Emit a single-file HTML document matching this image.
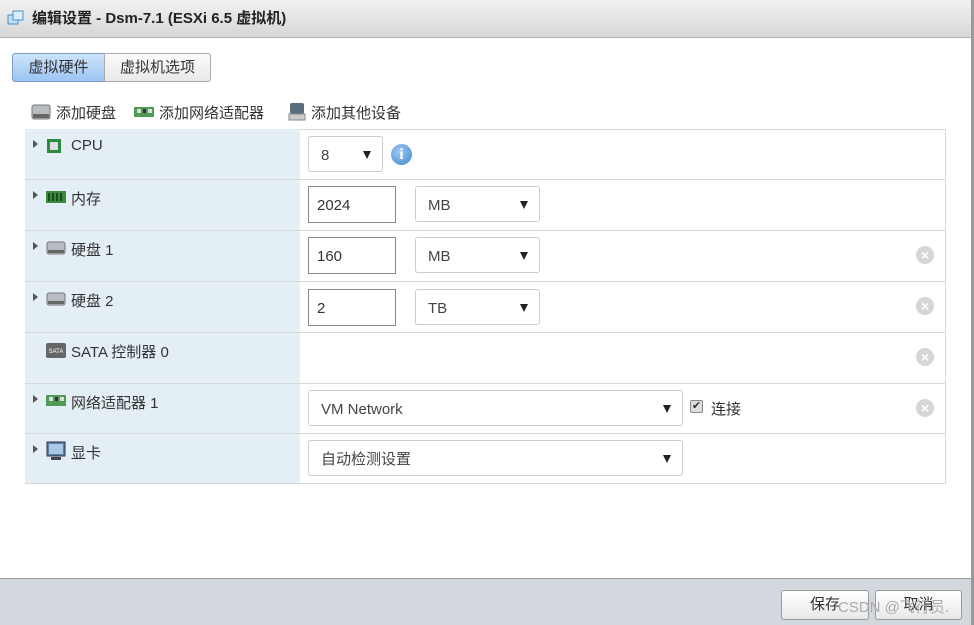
<!DOCTYPE html>
<html><head><meta charset="utf-8"><style>
*{box-sizing:border-box;margin:0;padding:0}
body{width:974px;height:625px;position:relative;background:#fff;font-family:"Liberation Sans","Noto Sans CJK SC",sans-serif;font-size:15px;color:#333;overflow:hidden}
.a{position:absolute}
.title{left:0;top:0;width:974px;height:38px;background:linear-gradient(#f2f2f2,#d6d6d6);border-bottom:1px solid #b5b5b5;font-weight:bold;font-size:15px;color:#222;line-height:37px;padding-left:32px}
.rb{right:0;top:0;width:3px;height:625px;background:#999}
.tab{top:53px;height:29px;line-height:27px;font-size:15px;text-align:center;border:1px solid #aaa}
.row{left:25px;width:921px;height:51px;border-top:1px solid #d8d8d8}
.lc{position:absolute;left:0;top:0;width:275px;height:100%;background:#e4eef5}
.lab{position:absolute;left:46px;top:8px;font-size:15px}
.tri{position:absolute;left:8px;top:11px;width:0;height:0;border-left:5px solid #555;border-top:4px solid transparent;border-bottom:4px solid transparent}
.ico{position:absolute;left:21px;top:9px}
.inp{position:absolute;height:37px;border:1px solid #888;padding-left:8px;line-height:37px;font-size:15px;background:#fff}
.sel{position:absolute;height:36px;border:1px solid #ccc;border-radius:3px;padding-left:12px;line-height:37px;font-size:15px;color:#444;background:#fff}
.sel:after{content:"";position:absolute;right:11px;top:14px;border-top:8px solid #222;border-left:4.5px solid transparent;border-right:4.5px solid transparent}
.x{position:absolute;left:891px;top:15px;width:18px;height:18px;border-radius:50%;background:#d6d6d6;color:#fff;font-size:14px;font-weight:bold;line-height:18px;text-align:center}
.footer{left:0;top:578px;width:971px;height:47px;background:#d3d8df;border-top:1px solid #999}
.btn{top:590px;height:30px;border:1px solid #999;border-radius:3px;background:linear-gradient(#fff,#e8e8e8);font-size:15px;line-height:28px;text-align:center}
</style></head><body>
<div class="a title">编辑设置 - Dsm-7.1 (ESXi 6.5 虚拟机)</div>
<svg class="a" style="left:7px;top:10px" width="18" height="16"><rect x="1" y="5" width="10" height="9" fill="#bfe0f7" stroke="#4a90c8"/><rect x="6" y="1" width="10" height="9" fill="#d8eefc" stroke="#4a90c8"/></svg>
<div class="a rb"></div>
<div class="a tab" style="left:12px;width:93px;background:linear-gradient(#cde3fb,#9cc4f2);border-color:#7a9cc8;border-radius:3px 0 0 3px">虚拟硬件</div>
<div class="a tab" style="left:104px;width:107px;background:linear-gradient(#fbfbfb,#e9e9e9);border-radius:0 3px 3px 0">虚拟机选项</div>

<svg class="a" style="left:31px;top:103px" width="20" height="18"><rect x="1" y="2" width="18" height="14" rx="2" fill="#b8bcc2" stroke="#777"/><rect x="2" y="11" width="16" height="4" fill="#666"/></svg>
<div class="a" style="left:56px;top:102px">添加硬盘</div>
<svg class="a" style="left:134px;top:106px" width="20" height="12"><rect x="0" y="1" width="20" height="10" fill="#4f9a55"/><rect x="3" y="3" width="4" height="4" fill="#ddd"/><rect x="9" y="3" width="3" height="4" fill="#333"/><rect x="14" y="3" width="4" height="4" fill="#ddd"/></svg>
<div class="a" style="left:159px;top:102px">添加网络适配器</div>
<svg class="a" style="left:288px;top:102px" width="18" height="20"><rect x="2" y="1" width="14" height="11" rx="2" fill="#5a6b7c"/><rect x="1" y="12" width="16" height="6" fill="#ccc" stroke="#888"/></svg>
<div class="a" style="left:311px;top:102px">添加其他设备</div>

<div class="a" style="left:25px;top:129px;width:921px;height:355px;border:1px solid #d8d8d8"></div>

<div class="a row" style="top:129px;border-top:none"><div class="lc"></div><div class="tri"></div>
<svg class="ico" width="16" height="16"><rect x="1" y="1" width="14" height="14" fill="#2e8b3a"/><rect x="4" y="4" width="8" height="8" fill="#dde"/></svg>
<div class="lab">CPU</div>
<div class="sel" style="left:283px;top:7px;width:75px">8</div>
<div style="position:absolute;left:366px;top:15px;width:21px;height:21px;border-radius:50%;background:radial-gradient(circle at 40% 35%,#9fcaf2,#3f86d0);color:#fff;font-weight:bold;text-align:center;line-height:21px;font-family:'Liberation Serif',serif;font-size:16px">i</div>
</div>

<div class="a row" style="top:179px"><div class="lc"></div><div class="tri"></div>
<svg class="ico" width="20" height="14" style="top:10px"><rect x="0" y="1" width="20" height="12" fill="#3d8a3f"/><rect x="2" y="3" width="2" height="8" fill="#1d4a1f"/><rect x="6" y="3" width="2" height="8" fill="#1d4a1f"/><rect x="10" y="3" width="2" height="8" fill="#1d4a1f"/><rect x="14" y="3" width="2" height="8" fill="#1d4a1f"/></svg>
<div class="lab">内存</div>
<div class="inp" style="left:283px;top:6px;width:88px">2024</div>
<div class="sel" style="left:390px;top:6px;width:125px">MB</div>
</div>

<div class="a row" style="top:230px"><div class="lc"></div><div class="tri"></div>
<svg class="ico" width="20" height="16"><rect x="1" y="2" width="18" height="12" rx="2" fill="#b8bcc2" stroke="#777"/><rect x="2" y="10" width="16" height="3" fill="#666"/></svg>
<div class="lab">硬盘 1</div>
<div class="inp" style="left:283px;top:6px;width:88px">160</div>
<div class="sel" style="left:390px;top:6px;width:125px">MB</div>
<div class="x">×</div>
</div>

<div class="a row" style="top:281px"><div class="lc"></div><div class="tri"></div>
<svg class="ico" width="20" height="16"><rect x="1" y="2" width="18" height="12" rx="2" fill="#b8bcc2" stroke="#777"/><rect x="2" y="10" width="16" height="3" fill="#666"/></svg>
<div class="lab">硬盘 2</div>
<div class="inp" style="left:283px;top:7px;width:88px">2</div>
<div class="sel" style="left:390px;top:7px;width:125px">TB</div>
<div class="x">×</div>
</div>

<div class="a row" style="top:332px"><div class="lc"></div>
<svg class="ico" width="20" height="16"><rect x="0" y="1" width="20" height="15" rx="2" fill="#666"/><text x="10" y="11" font-size="6" fill="#fff" text-anchor="middle" font-family="Liberation Sans">SATA</text></svg>
<div class="lab">SATA 控制器 0</div>
<div class="x">×</div>
</div>

<div class="a row" style="top:383px"><div class="lc"></div><div class="tri"></div>
<svg class="ico" width="20" height="14" style="top:10px"><rect x="0" y="1" width="20" height="11" fill="#4f9a55"/><rect x="3" y="3" width="4" height="4" fill="#ddd"/><rect x="9" y="3" width="3" height="4" fill="#333"/><rect x="14" y="3" width="4" height="4" fill="#ddd"/></svg>
<div class="lab">网络适配器 1</div>
<div class="sel" style="left:283px;top:6px;width:375px">VM Network</div>
<div style="position:absolute;left:665px;top:16px;width:13px;height:13px;border:1px solid #888;border-radius:2px;background:#ddd;font-size:11px;line-height:11px;text-align:center">✔</div>
<div style="position:absolute;left:686px;top:14px">连接</div>
<div class="x">×</div>
</div>

<div class="a row" style="top:433px;height:50px"><div class="lc"></div><div class="tri"></div>
<svg class="ico" width="20" height="20" style="top:7px"><rect x="1" y="1" width="18" height="14" fill="#5a7fa8" stroke="#334"/><rect x="3" y="3" width="14" height="10" fill="#aac8e6"/><rect x="5" y="16" width="10" height="3" fill="#445"/></svg>
<div class="lab">显卡</div>
<div class="sel" style="left:283px;top:6px;width:375px">自动检测设置</div>
</div>

<div class="a footer"></div>
<div class="a btn" style="left:781px;width:88px">保存</div>
<div class="a btn" style="left:875px;width:87px">取消</div>
<div class="a" style="left:838px;top:596px;color:#aaa;font-size:15px">CSDN @飞行员.</div>
</body></html>
